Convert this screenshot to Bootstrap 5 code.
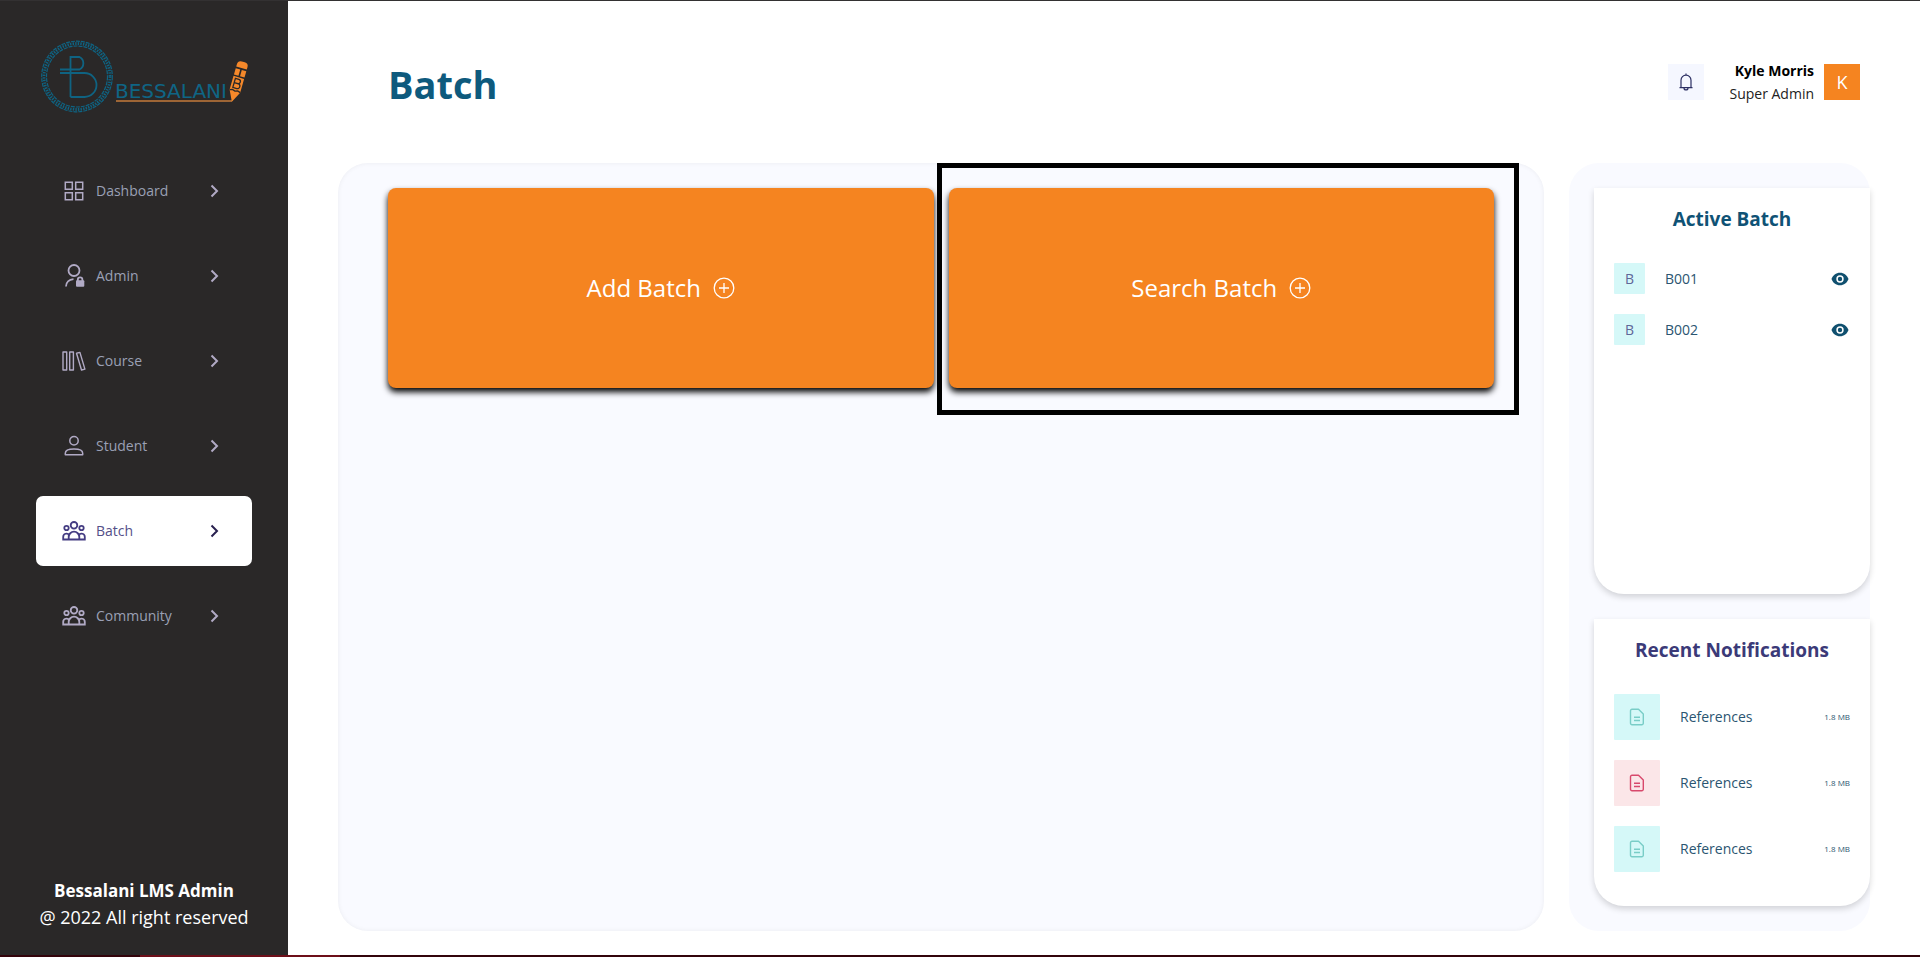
<!DOCTYPE html>
<html lang="en">
<head>
<meta charset="utf-8">
<meta name="viewport" content="width=device-width, initial-scale=1">
<title>Batch - Bessalani LMS Admin</title>
<link href="https://cdn.jsdelivr.net/npm/bootstrap@5.3.0/dist/css/bootstrap.min.css" rel="stylesheet">
<style>
  body { font-family: "Open Sans", "Noto Sans", sans-serif; font-size: 14px; line-height: 24px; color: #000; background: #fff; }
  .top-line { height: 1px; background: #333132; }
  .bottom-line { height: 2px; background: #33040b; }
  .bottom-line span { width: 200px; margin-left: 140px; background: #6d0f19; }
  .sidebar { width: 15%; min-width: 288px; background: #2a2828; padding: 36px 36px 24px; }
  .brand { height: 119px; margin-left: 4px; }
  .menu { gap: 15px; }
  .menu-link { height: 70px; padding: 0 29px 0 26px; gap: 10px; border-radius: 7px; color: #9aa0b5; text-decoration: none; }
  .menu-link svg { color: #b1aac5; }
  .menu-link.active { background: #fff; color: #544f88; }
  .menu-link.active svg { color: #443c82; }
  .menu-link.active .chevron { color: #28204f; }
  .sidebar-foot { color: #fff; font-size: 18px; line-height: 27px; white-space: nowrap; }
  .sidebar-foot .fw-bold { font-size: 17px; }
  .page-head { height: 162px; padding: 0 10px 0 50px; }
  .page-title { font-size: 38px; line-height: 48px; color: #0e5a7d; padding-top: 3px; }
  .content { padding: 0 50px 24px; }
  .bell { width: 36px; height: 36px; background: #f5f7ff; color: #2c2f63; }
  .user-info { line-height: 23px; margin-left: 25px; margin-right: 10px; }
  .user-role { color: #222; }
  .avatar { width: 36px; height: 36px; background: #f58420; color: #fff; font-size: 18px; }
  .panels { gap: 25px; }
  .panel { background: #f9faff; border-radius: 30px; }
  .main-panel { padding: 25px 50px; box-shadow: inset 0 0 5px rgba(0,0,0,.06); }
  .tiles { gap: 15px; }
  .tile { height: 200px; gap: 12px; background: #f58420; color: #fff; font-size: 24px; border: 0; border-radius: 8px; box-shadow: 0 4px 6px #000; }
  .highlight { position: absolute; top: -25px; right: -25px; bottom: -27px; left: -12px; border: 5px solid #000; pointer-events: none; }
  .side-panel { width: 301px; padding: 25px 0 25px 25px; gap: 25px; }
  .side-card { background: #fff; border-radius: 0 0 30px 30px; padding: 16px 20px 34px; box-shadow: 0 3px 6px rgba(0,0,0,.16); }
  .side-title { font-size: 19px; line-height: 30px; color: #0f5275; }
  .side-title.alt { color: #3b3a78; }
  .side-list { margin-top: 29px; gap: 20px; color: #2b5571; }
  .code-box { width: 31px; height: 31px; background: #d5f8f8; color: #5f6798; border-radius: 1px; }
  .file-box { width: 46px; height: 46px; background: #d5f8f8; color: #79cdc7; border-radius: 1px; }
  .file-box.red { background: #fbe6e8; color: #d8496c; }
  .view-btn { width: 18px; height: 18px; color: #10506f; margin-right: 1px; }
  .file-size { font-size: 8px; }
  .notices { margin-top: 29px; }
  .notices.side-list { padding-top: 0; }
  .notice-card .side-list { margin-top: 29px; }
</style>
</head>
<body class="min-vh-100 d-flex flex-column">

<svg class="d-none" xmlns="http://www.w3.org/2000/svg">
  <symbol id="i-chevron" viewBox="0 0 16 16"><path d="M4.500 2.500 10 8l-5.500 5.500" fill="none" stroke="currentColor" stroke-width="2"/></symbol>
  <symbol id="i-group" viewBox="0 0 24 24"><g fill="none" stroke="currentColor" stroke-width="1.800"><circle cx="12" cy="6.300" r="3.300"/><circle cx="4.500" cy="9" r="2.200"/><circle cx="19.500" cy="9" r="2.200"/><path d="M6.700 20.500V18a5.300 5.300 0 0 1 10.600 0v2.500zM6.700 20.500H1.200v-2.600a3.300 3.300 0 0 1 6-1.900M17.300 20.500h5.500v-2.600a3.300 3.300 0 0 0-6-1.900"/></g></symbol>
  <symbol id="i-plus" viewBox="0 0 22 22"><g fill="none" stroke="currentColor" stroke-width="1.300"><circle cx="11" cy="11" r="9.800"/><path d="M11 6v10M6 11h10"/></g></symbol>
  <symbol id="i-eye" viewBox="0 0 18 18"><path fill="currentColor" fill-rule="evenodd" d="M9 2.700C5 2.700 1.800 5.200.5 9 1.800 12.800 5 15.300 9 15.300s7.200-2.500 8.500-6.300C16.200 5.200 13 2.700 9 2.700zm0 2.600a3.700 3.700 0 1 1 0 7.400 3.700 3.700 0 0 1 0-7.400zm0 1.500a2.200 2.200 0 1 0 0 4.400 2.200 2.200 0 0 0 0-4.400z"/></symbol>
  <symbol id="i-file" viewBox="0 0 16 18"><g fill="none" stroke="currentColor" stroke-width="1.400" stroke-linejoin="round"><path d="M3 1.200h6.500L14.300 6v9.300a1.500 1.500 0 0 1-1.500 1.500H3a1.500 1.500 0 0 1-1.500-1.500V2.700A1.500 1.500 0 0 1 3 1.200zM5 9.300h6M5 12.500h6"/></g></symbol>
</svg>

<div class="top-line"></div>
<div class="d-flex flex-grow-1">

  <aside class="sidebar d-flex flex-column flex-shrink-0">
    <a class="brand d-block" href="#" aria-label="Bessalani">
      <svg width="210" height="80" viewBox="0 0 210 80">
        <g fill="none" stroke="#0f6382">
          <circle cx="37" cy="39.500" r="35.300" stroke-width="1.200" stroke-dasharray="4 1"/>
          <circle cx="37" cy="39.500" r="33" stroke-width="2.800" stroke-dasharray="1.400 1.200"/>
          <circle cx="37" cy="39.500" r="30.500" stroke-width="1.200" stroke-dasharray="4 1"/>
          <path stroke-width="1.800" d="M30.500 60V20h9a7 7 0 0 1 0 12.500H20M20 36h24.500a12 12 0 0 1 0 24h-14"/>
        </g>
        <text x="75" y="61" font-family="DejaVu Sans" font-size="20" fill="#0f6585">BESSALANI</text>
        <path d="M76 64h116" stroke="#c47a3a" stroke-width="1.500"/>
        <g transform="translate(197.500 45) rotate(16)">
          <path fill="#f5882a" d="M-5.500-14.500v-2.500a4 4 0 0 1 4-4h3a4 4 0 0 1 4 4v2.500zM-5.500-12.800h4.700v6.500h-4.700zM.8-12.800h4.700v6.500H.8zM-5.500-4.800h11V9.500L0 20.500-5.500 9.500z"/>
          <path fill="none" stroke="#2a2828" stroke-width="1.300" d="M-3-3h3.500a2 2 0 0 1 0 4.500H-3h4a2.300 2.300 0 0 1 0 5h-4zM-5.500 9.500l2.700-1L0 9.500l2.700-1 2.800 1"/>
        </g>
      </svg>
    </a>
    <nav class="menu d-flex flex-column" aria-label="Main">
      <a class="menu-link d-flex align-items-center" href="#">
        <svg width="24" height="24" viewBox="0 0 24 24"><path fill="none" stroke="currentColor" stroke-width="1.500" d="M3.300 3.300h7v7h-7zM13.700 3.300h7v7h-7zM3.300 13.700h7v7h-7zM13.700 13.700h7v7h-7z"/></svg>
        <span class="flex-grow-1">Dashboard</span><svg class="chevron" width="16" height="16"><use href="#i-chevron"/></svg>
      </a>
      <a class="menu-link d-flex align-items-center" href="#">
        <svg width="24" height="24" viewBox="0 0 24 24"><g fill="none" stroke="currentColor" stroke-width="1.800"><circle cx="12" cy="6.500" r="5.500"/><path d="M4 22.500c0-4 3-7 7.500-7.400M15.800 17v-1.300a2.300 2.300 0 0 1 4.600 0V17"/></g><rect x="14" y="16.200" width="8.300" height="6.500" rx="1" fill="currentColor"/></svg>
        <span class="flex-grow-1">Admin</span><svg class="chevron" width="16" height="16"><use href="#i-chevron"/></svg>
      </a>
      <a class="menu-link d-flex align-items-center" href="#">
        <svg width="24" height="24" viewBox="0 0 24 24"><path fill="none" stroke="currentColor" stroke-width="1.400" stroke-linejoin="round" d="M1 3h3.700v18H1zM7.700 3h3.700v18H7.700zM14.500 4.300l3.400-.9 5 16.700-3.400.9z"/></svg>
        <span class="flex-grow-1">Course</span><svg class="chevron" width="16" height="16"><use href="#i-chevron"/></svg>
      </a>
      <a class="menu-link d-flex align-items-center" href="#">
        <svg width="24" height="24" viewBox="0 0 24 24"><g fill="none" stroke="currentColor" stroke-width="1.500" stroke-linejoin="round"><circle cx="12" cy="6.800" r="4.200"/><path d="M3.300 20.700v-1.500c0-2.800 4-4.200 8.700-4.200s8.700 1.400 8.700 4.200v1.500z"/></g></svg>
        <span class="flex-grow-1">Student</span><svg class="chevron" width="16" height="16"><use href="#i-chevron"/></svg>
      </a>
      <a class="menu-link active d-flex align-items-center" href="#" aria-current="page">
        <svg width="24" height="24"><use href="#i-group"/></svg>
        <span class="flex-grow-1">Batch</span><svg class="chevron" width="16" height="16"><use href="#i-chevron"/></svg>
      </a>
      <a class="menu-link d-flex align-items-center" href="#">
        <svg width="24" height="24"><use href="#i-group"/></svg>
        <span class="flex-grow-1">Community</span><svg class="chevron" width="16" height="16"><use href="#i-chevron"/></svg>
      </a>
    </nav>
    <footer class="sidebar-foot text-center mt-auto">
      <div class="fw-bold">Bessalani LMS Admin</div>
      <div>@ 2022 All right reserved</div>
    </footer>
  </aside>

  <main class="content d-flex flex-column flex-grow-1">
    <header class="page-head d-flex align-items-center justify-content-between">
      <h1 class="page-title fw-bold mb-0">Batch</h1>
      <div class="d-flex align-items-center">
        <button type="button" class="bell btn p-0 border-0 rounded-0 d-flex align-items-center justify-content-center" aria-label="Notifications">
          <svg width="16" height="18" viewBox="0 0 16 18"><path fill="none" stroke="currentColor" stroke-width="1.200" stroke-linejoin="round" d="M8 .5v1.200M1.500 14.700h13M3 14.500V7.200a5 5 0 0 1 10 0v7.300M6 14.900a2 2 0 0 0 4 0"/></svg>
        </button>
        <div class="user-info text-end">
          <div class="fw-bold">Kyle Morris</div>
          <div class="user-role">Super Admin</div>
        </div>
        <div class="avatar d-flex align-items-center justify-content-center">K</div>
      </div>
    </header>

    <div class="panels d-flex flex-grow-1">
      <section class="panel main-panel flex-grow-1">
        <div class="tiles d-flex">
          <div class="flex-fill w-50">
            <button type="button" class="tile btn w-100 d-flex align-items-center justify-content-center">Add Batch <svg width="22" height="22"><use href="#i-plus"/></svg></button>
          </div>
          <div class="flex-fill w-50 position-relative">
            <button type="button" class="tile btn w-100 d-flex align-items-center justify-content-center">Search Batch <svg width="22" height="22"><use href="#i-plus"/></svg></button>
            <div class="highlight"></div>
          </div>
        </div>
      </section>

      <aside class="panel side-panel d-flex flex-column flex-shrink-0">
        <section class="side-card flex-grow-1">
          <h2 class="side-title fw-bold text-center mb-0">Active Batch</h2>
          <ul class="side-list list-unstyled d-flex flex-column mb-0">
            <li class="d-flex align-items-center">
              <span class="code-box d-flex align-items-center justify-content-center">B</span><span class="ms-3 ps-1 flex-grow-1">B001</span>
              <button type="button" class="view-btn btn p-0 border-0 d-flex" aria-label="View B001"><svg width="18" height="18"><use href="#i-eye"/></svg></button>
            </li>
            <li class="d-flex align-items-center">
              <span class="code-box d-flex align-items-center justify-content-center">B</span><span class="ms-3 ps-1 flex-grow-1">B002</span>
              <button type="button" class="view-btn btn p-0 border-0 d-flex" aria-label="View B002"><svg width="18" height="18"><use href="#i-eye"/></svg></button>
            </li>
          </ul>
        </section>
        <section class="side-card">
          <h2 class="side-title alt fw-bold text-center mb-0">Recent Notifications</h2>
          <ul class="side-list list-unstyled d-flex flex-column mb-0">
            <li class="d-flex align-items-center">
              <span class="file-box d-flex align-items-center justify-content-center"><svg width="16" height="18"><use href="#i-file"/></svg></span><span class="ms-3 ps-1 flex-grow-1">References</span><span class="file-size">1.8 MB</span>
            </li>
            <li class="d-flex align-items-center">
              <span class="file-box red d-flex align-items-center justify-content-center"><svg width="16" height="18"><use href="#i-file"/></svg></span><span class="ms-3 ps-1 flex-grow-1">References</span><span class="file-size">1.8 MB</span>
            </li>
            <li class="d-flex align-items-center">
              <span class="file-box d-flex align-items-center justify-content-center"><svg width="16" height="18"><use href="#i-file"/></svg></span><span class="ms-3 ps-1 flex-grow-1">References</span><span class="file-size">1.8 MB</span>
            </li>
          </ul>
        </section>
      </aside>
    </div>
  </main>
</div>
<div class="bottom-line d-flex"><span></span></div>

<script src="https://cdn.jsdelivr.net/npm/bootstrap@5.3.0/dist/js/bootstrap.bundle.min.js"></script>
</body>
</html>
